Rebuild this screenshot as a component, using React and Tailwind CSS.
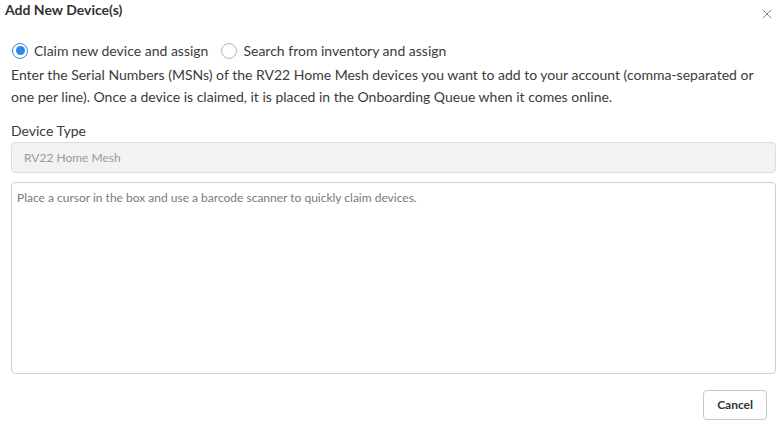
import { X } from 'lucide-react';

const font = { fontFamily: 'Lato, "Open Sans", sans-serif' };

const Radio = ({ checked, label }) => (
  <label className="flex items-center gap-[6px] cursor-pointer">
    {checked ? (
      <span className="flex h-[16px] w-[16px] items-center justify-center rounded-full border-[1.5px] border-[#2f86eb]">
        <span className="h-[9px] w-[9px] rounded-full bg-[#2f86eb]" />
      </span>
    ) : (
      <span className="h-[16px] w-[16px] rounded-full border border-[#b5b5b5]" />
    )}
    <span className="text-[14px] text-[#3b3b3b]">{label}</span>
  </label>
);

export default function App() {
  return (
    <div className="h-[425px] w-[781px] bg-white text-[#3b3b3b]" style={font}>
      <div className="flex items-start justify-between pl-[5px] pr-[6px]">
        <h2 className="text-[14px] leading-[20px] font-bold text-[#333]">Add New Device(s)</h2>
        <X size={16} strokeWidth={1.5} className="mt-[6px] text-[#8a8a8a]" />
      </div>

      <div className="pl-[11px] pr-[5px]">
        <div className="mt-[18px] flex items-center gap-[13px] pl-[1px]">
          <Radio checked label="Claim new device and assign" />
          <Radio label="Search from inventory and assign" />
        </div>

        <p className="mt-[3px] text-[14px] leading-[22px] text-[#3b3b3b]">
          Enter the Serial Numbers (MSNs) of the RV22 Home Mesh devices you want to add to your account (comma-separated or one per line). Once a device is claimed, it is placed in the Onboarding Queue when it comes online.
        </p>

        <div className="mt-[12px] text-[14px] text-[#3b3b3b]">Device Type</div>
        <div className="mt-[1px] flex h-[31px] items-center rounded-[4px] border border-[#dcdcdc] bg-[#f2f2f3] pl-[12px] text-[12px] text-[#9a9a9a]">
          RV22 Home Mesh
        </div>

        <textarea
          className="mt-[9px] block h-[192px] w-full resize-none rounded-[4px] border border-[#cfcfcf] px-[5px] py-[6px] text-[12px] text-[#3b3b3b] placeholder:text-[#7a7a7a] outline-none"
          placeholder="Place a cursor in the box and use a barcode scanner to quickly claim devices."
          style={font}
        />

        <div className="mt-[16px] flex justify-end pr-[9px]">
          <button className="h-[30px] rounded-[4px] border border-[#c8c8c8] bg-white px-[13px] text-[12px] font-bold text-[#333]">
            Cancel
          </button>
        </div>
      </div>
    </div>
  );
}
